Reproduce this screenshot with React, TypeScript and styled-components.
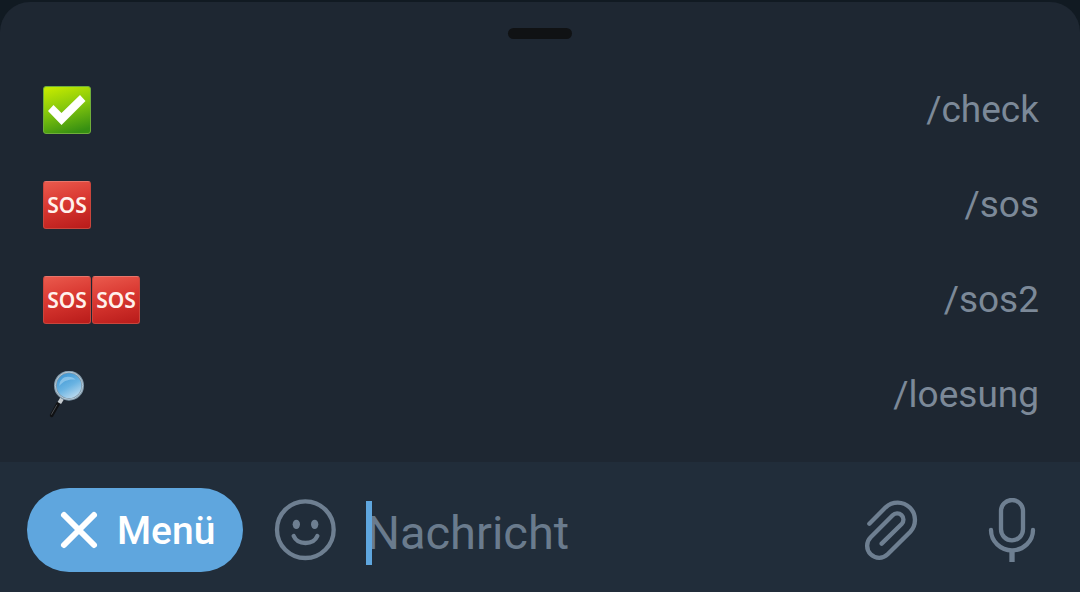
import React from "react";
import styled, { createGlobalStyle } from "styled-components";

const GlobalStyle = createGlobalStyle`
  *, *::before, *::after { box-sizing: border-box; }
  body {
    margin: 0;
    background: #111a22;
    font-family: Roboto, "Liberation Sans", sans-serif;
  }
`;

const Screen = styled.main`
  display: flex;
  flex-direction: column;
  min-height: 100vh;
  padding-top: 2px;
`;

const Sheet = styled.section`
  display: flex;
  flex-direction: column;
  flex: 1;
  padding-bottom: 20px;
  border-radius: 30px 30px 0 0;
  background: #1e2732;
`;

const HandleArea = styled.div`
  display: flex;
  justify-content: center;
  height: 60px;
  padding-top: 26px;
`;

const Handle = styled.div`
  width: 64px;
  height: 11px;
  border-radius: 6px;
  background: #101214;
`;

const CommandList = styled.ul`
  margin: 0;
  padding: 0;
  list-style: none;
`;

const CommandRow = styled.button`
  display: flex;
  align-items: center;
  justify-content: space-between;
  width: 100%;
  height: 95px;
  padding: 0 41px 0 43px;
  border: 0;
  background: none;
  color: #7c8998;
  font: 400 37px/44px Roboto, "Liberation Sans", sans-serif;
  text-align: left;
  cursor: pointer;
`;

const Emojis = styled.span`
  display: flex;
  gap: 1px;
`;

const SosTile = styled.span`
  display: flex;
  align-items: center;
  justify-content: center;
  width: 48px;
  height: 48px;
  border: 1px solid #c9453c;
  border-top-color: #e8746a;
  border-radius: 3px;
  background: linear-gradient(165deg, #ea5a4d 0%, #d93831 45%, #b81b1a 100%);
  color: #fff1ec;
  font: 600 21px/24px "Noto Sans", "Open Sans", sans-serif;
`;

const Composer = styled.form`
  display: flex;
  align-items: center;
  height: 130px;
  padding: 6px 44px 0 27px;
  background: #212d3a;
  color: #6e7f91;
`;

const MenuButton = styled.button`
  display: flex;
  align-items: center;
  flex-shrink: 0;
  gap: 18px;
  height: 84px;
  padding: 0 28px 0 32px;
  border: 0;
  border-radius: 42px;
  background: #5fa6de;
  color: #fff;
  font: 500 39px/48px Roboto, "Liberation Sans", sans-serif;
  cursor: pointer;
`;

const MenuLabel = styled.span`
  padding-top: 2px;
`;

const IconButton = styled.button<{ $before: number }>`
  display: flex;
  flex-shrink: 0;
  margin-left: ${(p) => p.$before}px;
  padding: 0;
  border: 0;
  background: none;
  color: inherit;
  cursor: pointer;
`;

const Field = styled.label`
  position: relative;
  flex: 1;
  min-width: 0;
  margin: 6px 0 0 28px;
`;

const Caret = styled.span`
  position: absolute;
  top: 0;
  left: 0;
  width: 6px;
  height: 64px;
  background: #5fa6de;
`;

const MessageInput = styled.input`
  display: block;
  width: 100%;
  height: 64px;
  padding: 0;
  border: 0;
  outline: 0;
  background: none;
  color: #fff;
  caret-color: transparent;
  font: 400 47px/64px Roboto, "Liberation Sans", sans-serif;
  &::placeholder { color: #6a7b8d; opacity: 1; }
`;

const Check = () => (
  <svg width="48" height="48" viewBox="0 0 48 48" aria-hidden="true">
    <defs>
      <linearGradient id="check-fill" x1="0.3" y1="0" x2="0.6" y2="1">
        <stop offset="0" stopColor="#c2e800" />
        <stop offset="0.45" stopColor="#86c80c" />
        <stop offset="1" stopColor="#368f12" />
      </linearGradient>
    </defs>
    <rect x="0.5" y="0.5" width="47" height="47" rx="2.5" fill="url(#check-fill)" stroke="#6fae3a" />
    <path d="M5 25 10.500 19 18.500 27 37 9 42.500 15 18.500 39Z" fill="#fff" />
  </svg>
);

const Sos = () => <SosTile>SOS</SosTile>;

const Magnifier = () => (
  <svg width="48" height="48" viewBox="39 333 144 144" aria-hidden="true">
    <defs>
      <linearGradient id="lens" x1="0.2" y1="0.1" x2="0.7" y2="1">
        <stop offset="0" stopColor="#3f97d4" />
        <stop offset="0.5" stopColor="#69b3e2" />
        <stop offset="1" stopColor="#c4def0" />
      </linearGradient>
    </defs>
    <path d="M84 432 65 466" stroke="#101113" strokeWidth="11" strokeLinecap="round" />
    <path d="M81 434 64 464" stroke="#4b4f54" strokeWidth="3" />
    <path d="M96 416 88 429" stroke="#c5cbd0" strokeWidth="12" />
    <circle cx="117" cy="377" r="41" fill="url(#lens)" stroke="#7f97a8" strokeWidth="8" />
    <circle cx="117" cy="377" r="41" fill="none" stroke="#b3c8d6" strokeWidth="3" />
    <path d="M88 378C88 360 100 350 114 350C124 350 132 353 137 359C118 356 100 362 88 378Z" fill="#a9d6f2" opacity="0.6" />
  </svg>
);

const Close = () => (
  <svg width="40" height="40" viewBox="0 0 40 40" fill="none" stroke="currentColor" strokeWidth="6" strokeLinecap="round" aria-hidden="true">
    <path d="M5 5 35 35M35 5 5 35" />
  </svg>
);

const Smile = () => (
  <svg width="64" height="64" viewBox="822 144 192 192" fill="none" stroke="currentColor" strokeWidth="13" strokeLinecap="round" aria-hidden="true">
    <circle cx="916" cy="239" r="85" />
    <path d="M881 258C893 286 940 286 952 258" />
    <ellipse cx="889" cy="223" rx="11" ry="14" fill="currentColor" stroke="none" />
    <ellipse cx="944" cy="223" rx="11" ry="14" fill="currentColor" stroke="none" />
  </svg>
);

const Paperclip = () => (
  <svg width="56" height="64" viewBox="72 54 168 192" fill="none" stroke="currentColor" strokeWidth="13" strokeLinecap="round" aria-hidden="true">
    <path d="M88 131 137 82A52 52 0 0 1 211 155L143 223A36 36 0 0 1 92 172L158 106A18.700 18.700 0 0 1 185 132L125 191" />
  </svg>
);

const Mic = () => (
  <svg width="48" height="64" viewBox="444 54 144 192" fill="none" stroke="currentColor" strokeWidth="13" aria-hidden="true">
    <rect x="483" y="60" width="66" height="121" rx="33" />
    <path d="M453 150A63 61 0 0 0 579 150" strokeLinecap="round" />
    <path d="M516 211V246" strokeWidth="16" />
  </svg>
);

const commands = [
  { name: "/check", icons: [Check] },
  { name: "/sos", icons: [Sos] },
  { name: "/sos2", icons: [Sos, Sos] },
  { name: "/loesung", icons: [Magnifier] },
];

export default function App() {
  return (
    <>
      <GlobalStyle />
      <Screen>
        <Sheet>
          <HandleArea>
            <Handle />
          </HandleArea>
          <CommandList>
            {commands.map(({ name, icons }) => (
              <li key={name}>
                <CommandRow type="button">
                  <Emojis>
                    {icons.map((Icon, i) => (
                      <Icon key={i} />
                    ))}
                  </Emojis>
                  <span>{name}</span>
                </CommandRow>
              </li>
            ))}
          </CommandList>
        </Sheet>
        <Composer onSubmit={(e) => e.preventDefault()}>
          <MenuButton type="button">
            <Close />
            <MenuLabel>Menü</MenuLabel>
          </MenuButton>
          <IconButton type="button" aria-label="Emoji" $before={31}>
            <Smile />
          </IconButton>
          <Field>
            <MessageInput type="text" placeholder="Nachricht" aria-label="Nachricht" />
            <Caret />
          </Field>
          <IconButton type="button" aria-label="Datei anhängen" $before={24}>
            <Paperclip />
          </IconButton>
          <IconButton type="button" aria-label="Sprachnachricht" $before={68}>
            <Mic />
          </IconButton>
        </Composer>
      </Screen>
    </>
  );
}
